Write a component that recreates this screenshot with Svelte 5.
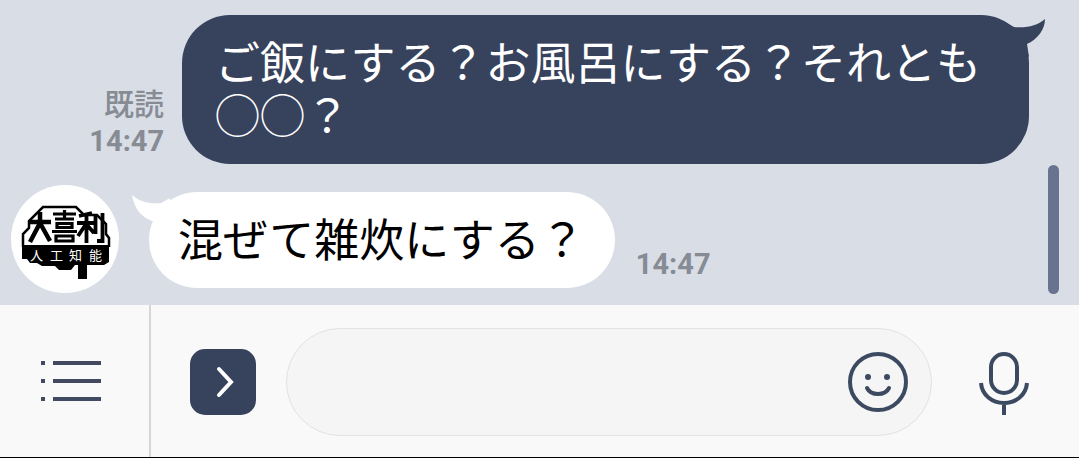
<script>
  let draft = $state('');
  const sent = { text: 'ご飯にする？お風呂にする？それとも\n◯◯？', time: '14:47', read: '既読' };
  const received = { text: '混ぜて雑炊にする？', time: '14:47' };
</script>

<div class="screen">
  <main class="chat">
    <div class="row sent">
      <div class="meta">
        <span class="read">{sent.read}</span>
        <time>{sent.time}</time>
      </div>
      <div class="bubble dark">
        <p>{sent.text}</p>
        <svg class="tail right" viewBox="0 0 50 50" aria-hidden="true">
          <path d="M8 6L19 12C32 13 42 11 50 4C50 14 43 24 32 29L34 42L16 30Z" />
        </svg>
      </div>
    </div>

    <div class="row received">
      <svg class="avatar" viewBox="0 0 108 108" role="img" aria-label="大喜利人工知能">
        <circle cx="54" cy="54" r="54" fill="#fff" />
        <path
          d="M12 62V49L18 43V36L32 22H65L73 30H86L95 39V49L98 53V62"
          fill="none"
          stroke="#000"
          stroke-width="2.5"
        />
        <path
          d="M11 60H98V77L93 80H76V94H67V80H64L60 85H48L44 81H31L26 78H19L16 74H11Z"
          fill="#000"
        />
        <g fill="none" stroke="#000">
          <path stroke-width="4.5" d="M18 37H40M29 27V38L19 57M29 38L39 56" />
          <path
            stroke-width="3.2"
            d="M42 29H65M53.5 25V34M44 34H63M46 38.500H61V42.500H46ZM41 46.500H66M45 51H62V56H45Z"
          />
          <path
            stroke-width="3.8"
            d="M81 28L68 31M66 38H83M75.500 30V58M75 39L67 51M76 40L83 48M84.500 30V49M91.500 28V56H86"
          />
        </g>
        <text x="19" y="75">人</text>
        <text x="39" y="75">工</text>
        <text x="58" y="75">知</text>
        <text x="78" y="75">能</text>
      </svg>
      <div class="bubble light">
        <svg class="tail left" viewBox="0 0 40 40" aria-hidden="true">
          <path d="M0 0C8 7 17 9 29 8L38 3L38 26L20 26C9 22 2 13 0 0Z" />
        </svg>
        <p>{received.text}</p>
      </div>
      <time>{received.time}</time>
    </div>
    <div class="scrollbar"></div>
  </main>

  <footer>
    <button class="menu" aria-label="メニュー">
      <svg width="62" height="42" viewBox="0 0 62 42">
        <path
          d="M1 3H5M13 3H61M1 21H5M13 21H61M1 39H5M13 39H61"
          stroke="#414a60"
          stroke-width="4"
        />
      </svg>
    </button>
    <div class="composer">
      <button class="expand" aria-label="開く">
        <svg width="66" height="66" viewBox="0 0 66 66">
          <path d="M29 20L41 33L29 46" fill="none" stroke="#fff" stroke-width="4" stroke-linecap="round" />
        </svg>
      </button>
      <div class="field">
        <input type="text" aria-label="メッセージ" bind:value={draft} />
        <button aria-label="スタンプ">
          <svg width="60" height="60" viewBox="0 0 60 60">
            <g fill="none" stroke="#3b4961" stroke-width="4">
              <circle cx="30" cy="30" r="28" />
              <path d="M19 36C23 44 37 44 41 36" stroke-linecap="round" />
            </g>
            <circle cx="20" cy="25" r="3" fill="#3b4961" />
            <circle cx="39" cy="25" r="3" fill="#3b4961" />
          </svg>
        </button>
      </div>
      <button class="mic" aria-label="音声">
        <svg width="52" height="66" viewBox="0 -3 52 66">
          <g fill="none" stroke="#3b4961" stroke-width="4">
            <rect x="13" y="2" width="26" height="39" rx="13" />
            <path d="M3 31C4 43 14 51 26 51C38 51 48 43 49 31M26 51V63" />
          </g>
        </svg>
      </button>
    </div>
  </footer>
</div>

<style>
  :global(body) {
    margin: 0;
    background: #f9f9f9;
  }
  .screen {
    font-family: Roboto, "Noto Sans CJK JP", sans-serif;
  }
  .chat {
    position: relative;
    display: flex;
    flex-direction: column;
    gap: 21px;
    padding: 15px 50px 12px 11px;
    background: #d8dde6;
  }
  .row {
    display: flex;
    align-items: flex-start;
  }
  .sent {
    justify-content: flex-end;
    align-items: flex-end;
    gap: 18px;
  }
  .meta {
    display: flex;
    flex-direction: column;
    align-items: flex-end;
    padding-bottom: 5px;
  }
  .read,
  time {
    color: #868b94;
    line-height: 36px;
    white-space: nowrap;
  }
  .read {
    font-size: 30px;
    font-weight: 500;
  }
  time {
    font-size: 29px;
    font-weight: 700;
  }
  .bubble {
    position: relative;
    border-radius: 48px;
  }
  .bubble p {
    position: relative;
    margin: 0;
    font-family: "Noto Sans CJK JP", sans-serif;
    font-size: 45px;
    line-height: 53px;
    white-space: pre-line;
  }
  .dark {
    padding: 19px 48px 24px 33px;
    background: #37435d;
    color: #fff;
  }
  .light {
    margin: 7px 21px 0 30px;
    padding: 19px 30px 24px 29px;
    background: #fff;
    color: #000;
  }
  .tail {
    position: absolute;
    overflow: visible;
  }
  .right {
    top: 0;
    right: -16px;
    width: 50px;
    height: 50px;
    fill: #37435d;
  }
  .left {
    top: 3px;
    left: -17px;
    width: 40px;
    height: 40px;
    fill: #fff;
  }
  .received time {
    align-self: flex-end;
    padding-bottom: 11px;
  }
  .avatar {
    flex: none;
    width: 108px;
    height: 108px;
  }
  .avatar text {
    fill: #fff;
    font-family: "Noto Sans CJK JP", sans-serif;
    font-size: 13px;
  }
  .scrollbar {
    position: absolute;
    right: 20px;
    bottom: 11px;
    width: 11px;
    height: 129px;
    border-radius: 6px;
    background: #69728f;
  }
  footer {
    display: flex;
    border-bottom: 1px solid #000;
    background: #f9f9f9;
  }
  button {
    display: flex;
    flex: none;
    align-items: center;
    justify-content: center;
    margin: 0;
    padding: 0;
    border: 0;
    background: none;
  }
  .menu {
    width: 151px;
    padding-right: 8px;
    border-right: 2px solid #d6d6d8;
  }
  .composer {
    display: flex;
    flex: 1;
    align-items: center;
    padding: 23px 49px 21px 39px;
    min-width: 0;
  }
  .expand {
    border-radius: 15px;
    background: #37435d;
  }
  .field {
    display: flex;
    flex: 1;
    align-items: center;
    box-sizing: border-box;
    min-width: 0;
    height: 108px;
    margin: 0 46px 0 30px;
    padding: 0 23px 0 40px;
    border: 1px solid #e2e2e2;
    border-radius: 54px;
    background: #f5f5f5;
  }
  input {
    flex: 1;
    min-width: 0;
    border: 0;
    outline: 0;
    background: none;
    color: #000;
    font: 40px "Noto Sans CJK JP", sans-serif;
  }
</style>
